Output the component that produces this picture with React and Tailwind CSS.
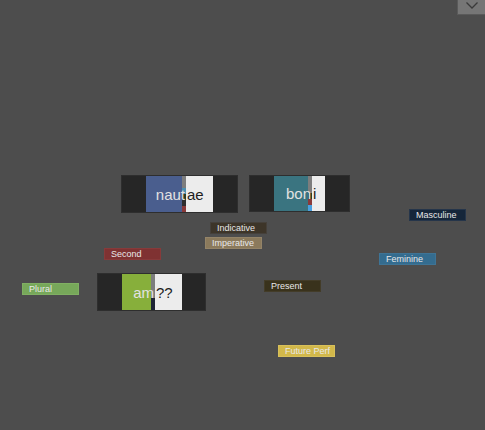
import React from "react";

function Strip({ segs }) {
  return (
    <div className="flex flex-col w-[4px] h-full bg-[#7d7d7d]">
      <div className="flex-1" />
      {segs.map((c, i) => (
        <div key={i} className="h-[6px]" style={{ background: c }} />
      ))}
    </div>
  );
}

function Word({ className, stem, stemBg, stemW, end, endW, segs }) {
  return (
    <div
      className={
        "absolute flex bg-[#262626] border border-[#2e2e2e] text-[15px] leading-none " +
        className
      }
    >
      <div className="w-[24px] shrink-0" />
      <div
        className="flex items-center justify-end h-full text-[#e2e2e2] whitespace-nowrap"
        style={{ width: stemW, background: stemBg }}
      >
        <span className="-mr-[3px] relative z-10">{stem}</span>
      </div>
      <Strip segs={segs} />
      <div
        className="flex items-center h-full bg-[#ececec] text-[#1e1e1e] whitespace-nowrap"
        style={{ width: endW }}
      >
        <span className="pl-[1px]">{end}</span>
      </div>
      <div className="flex-1" />
    </div>
  );
}

function Tag({ className, children }) {
  return (
    <div
      className={
        "absolute w-[57px] h-[12px] flex items-center pl-[6px] text-[9px] leading-none text-[#e8e8e8] border " +
        className
      }
    >
      {children}
    </div>
  );
}

export default function App() {
  return (
    <div
      className="relative w-[485px] h-[430px] bg-[#4d4d4d] overflow-hidden"
      style={{ fontFamily: '"Liberation Sans", Arial, sans-serif' }}
    >
      <button className="absolute right-0 top-0 w-[28px] h-[15px] bg-[#767676] border-l border-b border-[#5a5a5a] flex items-start justify-center">
        <svg width="14" height="9" viewBox="0 0 14 9" className="mt-[1px]">
          <path d="M1.5 1.5 L7 7 L12.5 1.5" fill="none" stroke="#3a3a3a" strokeWidth="1.3" />
        </svg>
      </button>

      <Word
        className="left-[121px] top-[175px] w-[117px] h-[38px]"
        stem="naut"
        stemBg="#4a5e8e"
        stemW={36}
        end="ae"
        endW={27}
        segs={["#4d8fb0", "#2b3a24", "#2e2e2e", "#8a3a3a"]}
      />
      <Word
        className="left-[249px] top-[175px] w-[101px] h-[37px]"
        stem="bon"
        stemBg="#3a7480"
        stemW={34}
        end="i"
        endW={13}
        segs={["#2a3f22", "#8a3a3a", "#4aa0e0"]}
      />
      <Word
        className="left-[97px] top-[273px] w-[109px] h-[38px]"
        stem="am"
        stemBg="#87af3b"
        stemW={29}
        end="??"
        endW={27}
        segs={["#1e2436", "#1e2436"]}
      />

      <Tag className="left-[210px] top-[222px] bg-[#3d3529] border-[#45403a]">Indicative</Tag>
      <Tag className="left-[205px] top-[237px] bg-[#8b7a5c] border-[#948468]">Imperative</Tag>
      <Tag className="left-[104px] top-[248px] bg-[#7f3232] border-[#873a3a]">Second</Tag>
      <Tag className="left-[22px] top-[283px] bg-[#77a85a] border-[#80b063]">Plural</Tag>
      <Tag className="left-[409px] top-[209px] bg-[#15263a] border-[#25354a]">Masculine</Tag>
      <Tag className="left-[379px] top-[253px] bg-[#346c8f] border-[#3e7496]">Feminine</Tag>
      <Tag className="left-[264px] top-[280px] bg-[#39321c] border-[#433c28]">Present</Tag>
      <Tag className="left-[278px] top-[345px] bg-[#d2b84a] border-[#d8c05a]">Future Perf</Tag>
    </div>
  );
}
